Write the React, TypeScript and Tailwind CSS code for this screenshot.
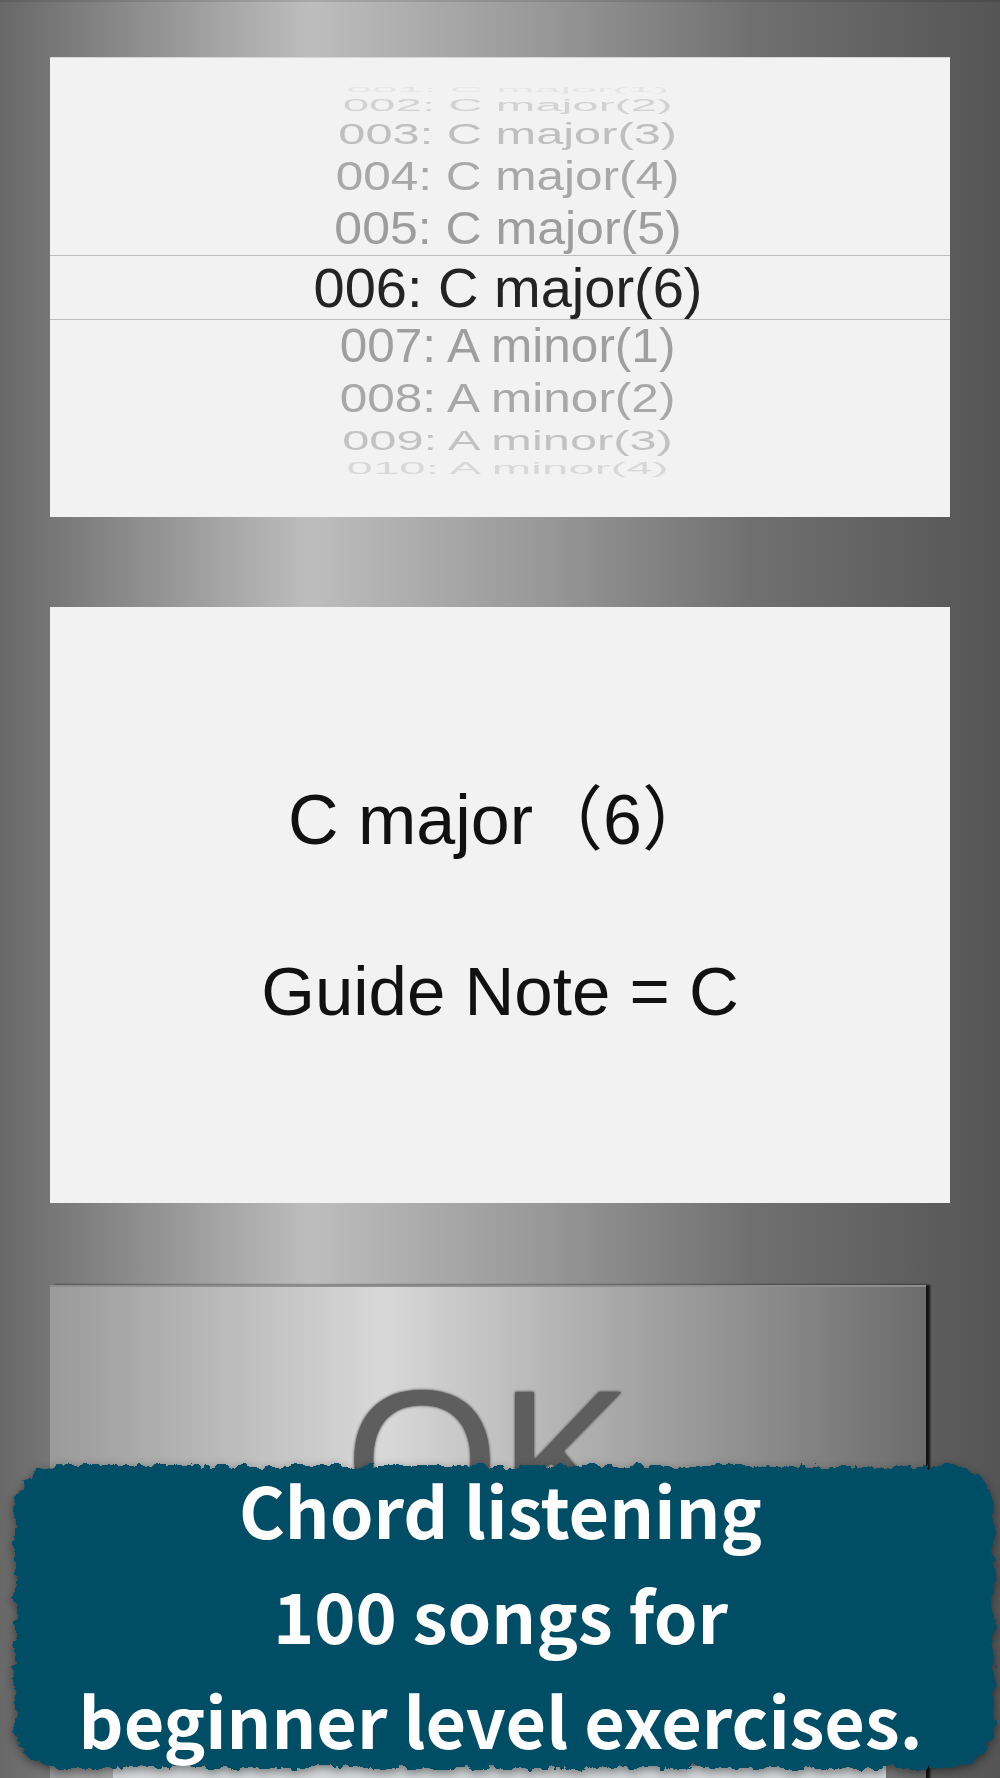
import React from "react";

type Row = { t: string; h: string; cls: string };

const above: Row[] = [
  { t: "001: C major(1)", h: "h-[6px]", cls: "scale-y-[0.13] scale-x-[0.93] text-[#e4e4e4]" },
  { t: "002: C major(2)", h: "h-[24px]", cls: "scale-y-[0.34] scale-x-[0.95] text-[#d2d2d2]" },
  { t: "003: C major(3)", h: "h-[34px]", cls: "scale-y-[0.58] scale-x-[0.975] text-[#bfbfbf]" },
  { t: "004: C major(4)", h: "h-[50px]", cls: "scale-y-[0.8] scale-x-[0.99] text-[#a8a8a8]" },
  { t: "005: C major(5)", h: "h-[54px]", cls: "scale-y-[0.94] scale-x-[1] text-[#9d9d9d]" },
];

const below: Row[] = [
  { t: "007: A minor(1)", h: "h-[52px]", cls: "scale-y-[0.97] scale-x-[0.99] text-[#9f9f9f]" },
  { t: "008: A minor(2)", h: "h-[52px]", cls: "scale-y-[0.8] scale-x-[0.99] text-[#a8a8a8]" },
  { t: "009: A minor(3)", h: "h-[32px]", cls: "scale-y-[0.56] scale-x-[0.975] text-[#c2c2c2]" },
  { t: "010: A minor(4)", h: "h-[24px]", cls: "scale-y-[0.34] scale-x-[0.95] text-[#d8d8d8]" },
];

function PickerRow({ r }: { r: Row }) {
  return (
    <div className={`flex items-center justify-center pl-[16px] ${r.h}`}>
      <span className={`inline-block whitespace-nowrap text-[50px] leading-none ${r.cls}`}>{r.t}</span>
    </div>
  );
}

function RoughBanner() {
  return (
    <svg
      width="987"
      height="310"
      viewBox="0 0 987 310"
      className="absolute left-0 top-0 overflow-visible drop-shadow-[0_3px_5px_rgba(0,0,0,0.45)]"
    >
      <defs>
        <filter id="rough" x="-3%" y="-6%" width="106%" height="112%">
          <feTurbulence type="fractalNoise" baseFrequency="0.09" numOctaves="4" seed="7" result="noise" />
          <feDisplacementMap in="SourceGraphic" in2="noise" scale="13" xChannelSelector="R" yChannelSelector="G" />
        </filter>
      </defs>
      <rect x="4" y="4" width="979" height="302" rx="44" ry="44" fill="#024e66" filter="url(#rough)" />
    </svg>
  );
}

export default function App() {
  return (
    <div className="relative h-[1778px] w-[1000px] overflow-hidden bg-[linear-gradient(to_right,#686868_0%,#bdbdbd_31%,#979797_55%,#707070_75%,#555555_100%)] font-['Liberation_Sans','Noto_Sans_CJK_JP',sans-serif]">
      <div className="h-[2px] bg-black/10" />
      <div className="flex flex-col px-[50px] pt-[55px]">
        {/* Picker */}
        <div className="flex h-[460px] flex-col overflow-hidden border-t border-[#d6d6d6] bg-[#f2f2f2] pt-[29px]">
          {above.map((r) => (
            <PickerRow key={r.t} r={r} />
          ))}
          <div className="flex h-[65px] items-center justify-center border-y border-[#bdbdbd] pl-[16px]">
            <span className="inline-block whitespace-nowrap text-[56px] leading-none text-[#232323]">006: C major(6)</span>
          </div>
          {below.map((r) => (
            <PickerRow key={r.t} r={r} />
          ))}
        </div>

        {/* Info panel */}
        <div className="mt-[90px] flex h-[596px] flex-col items-center bg-[#f2f2f2] pt-[178px] text-[#111]">
          <div className="h-[70px] whitespace-nowrap text-[70px] leading-none">C major（6）</div>
          <div className="mt-[102px] h-[69px] whitespace-nowrap text-[69px] leading-none">Guide Note = C</div>
        </div>

        {/* OK button */}
        <div className="mt-[82px] flex h-[520px] w-[876px] justify-center border-t-2 border-[#8e8e8e] bg-[linear-gradient(to_right,#9a9a9a_0%,#d8d8d8_38%,#a6a6a6_66%,#6c6c6c_100%)] pt-[75px] shadow-[4px_0_2px_rgba(0,0,0,0.8)]">
          <span className="text-[198px] leading-none text-[#5e5e5e] [text-shadow:0_0_3px_rgba(0,0,0,0.85)]">OK</span>
        </div>
      </div>

      {/* light strip under banner */}
      <div className="absolute left-[113px] top-[1766px] h-[12px] w-[773px] bg-[#d3d7d9]" />

      {/* Promo banner */}
      <div className="absolute left-[11px] top-[1462px] h-[310px] w-[987px]">
        <RoughBanner />
        <div className="relative -mt-[6px] flex flex-col items-center pr-[8px] font-['Noto_Sans_CJK_JP',sans-serif] text-[70px] font-bold leading-[105px] text-white">
          <div className="whitespace-nowrap">Chord listening</div>
          <div className="whitespace-nowrap">100 songs for</div>
          <div className="whitespace-nowrap">beginner level exercises.</div>
        </div>
      </div>
    </div>
  );
}
